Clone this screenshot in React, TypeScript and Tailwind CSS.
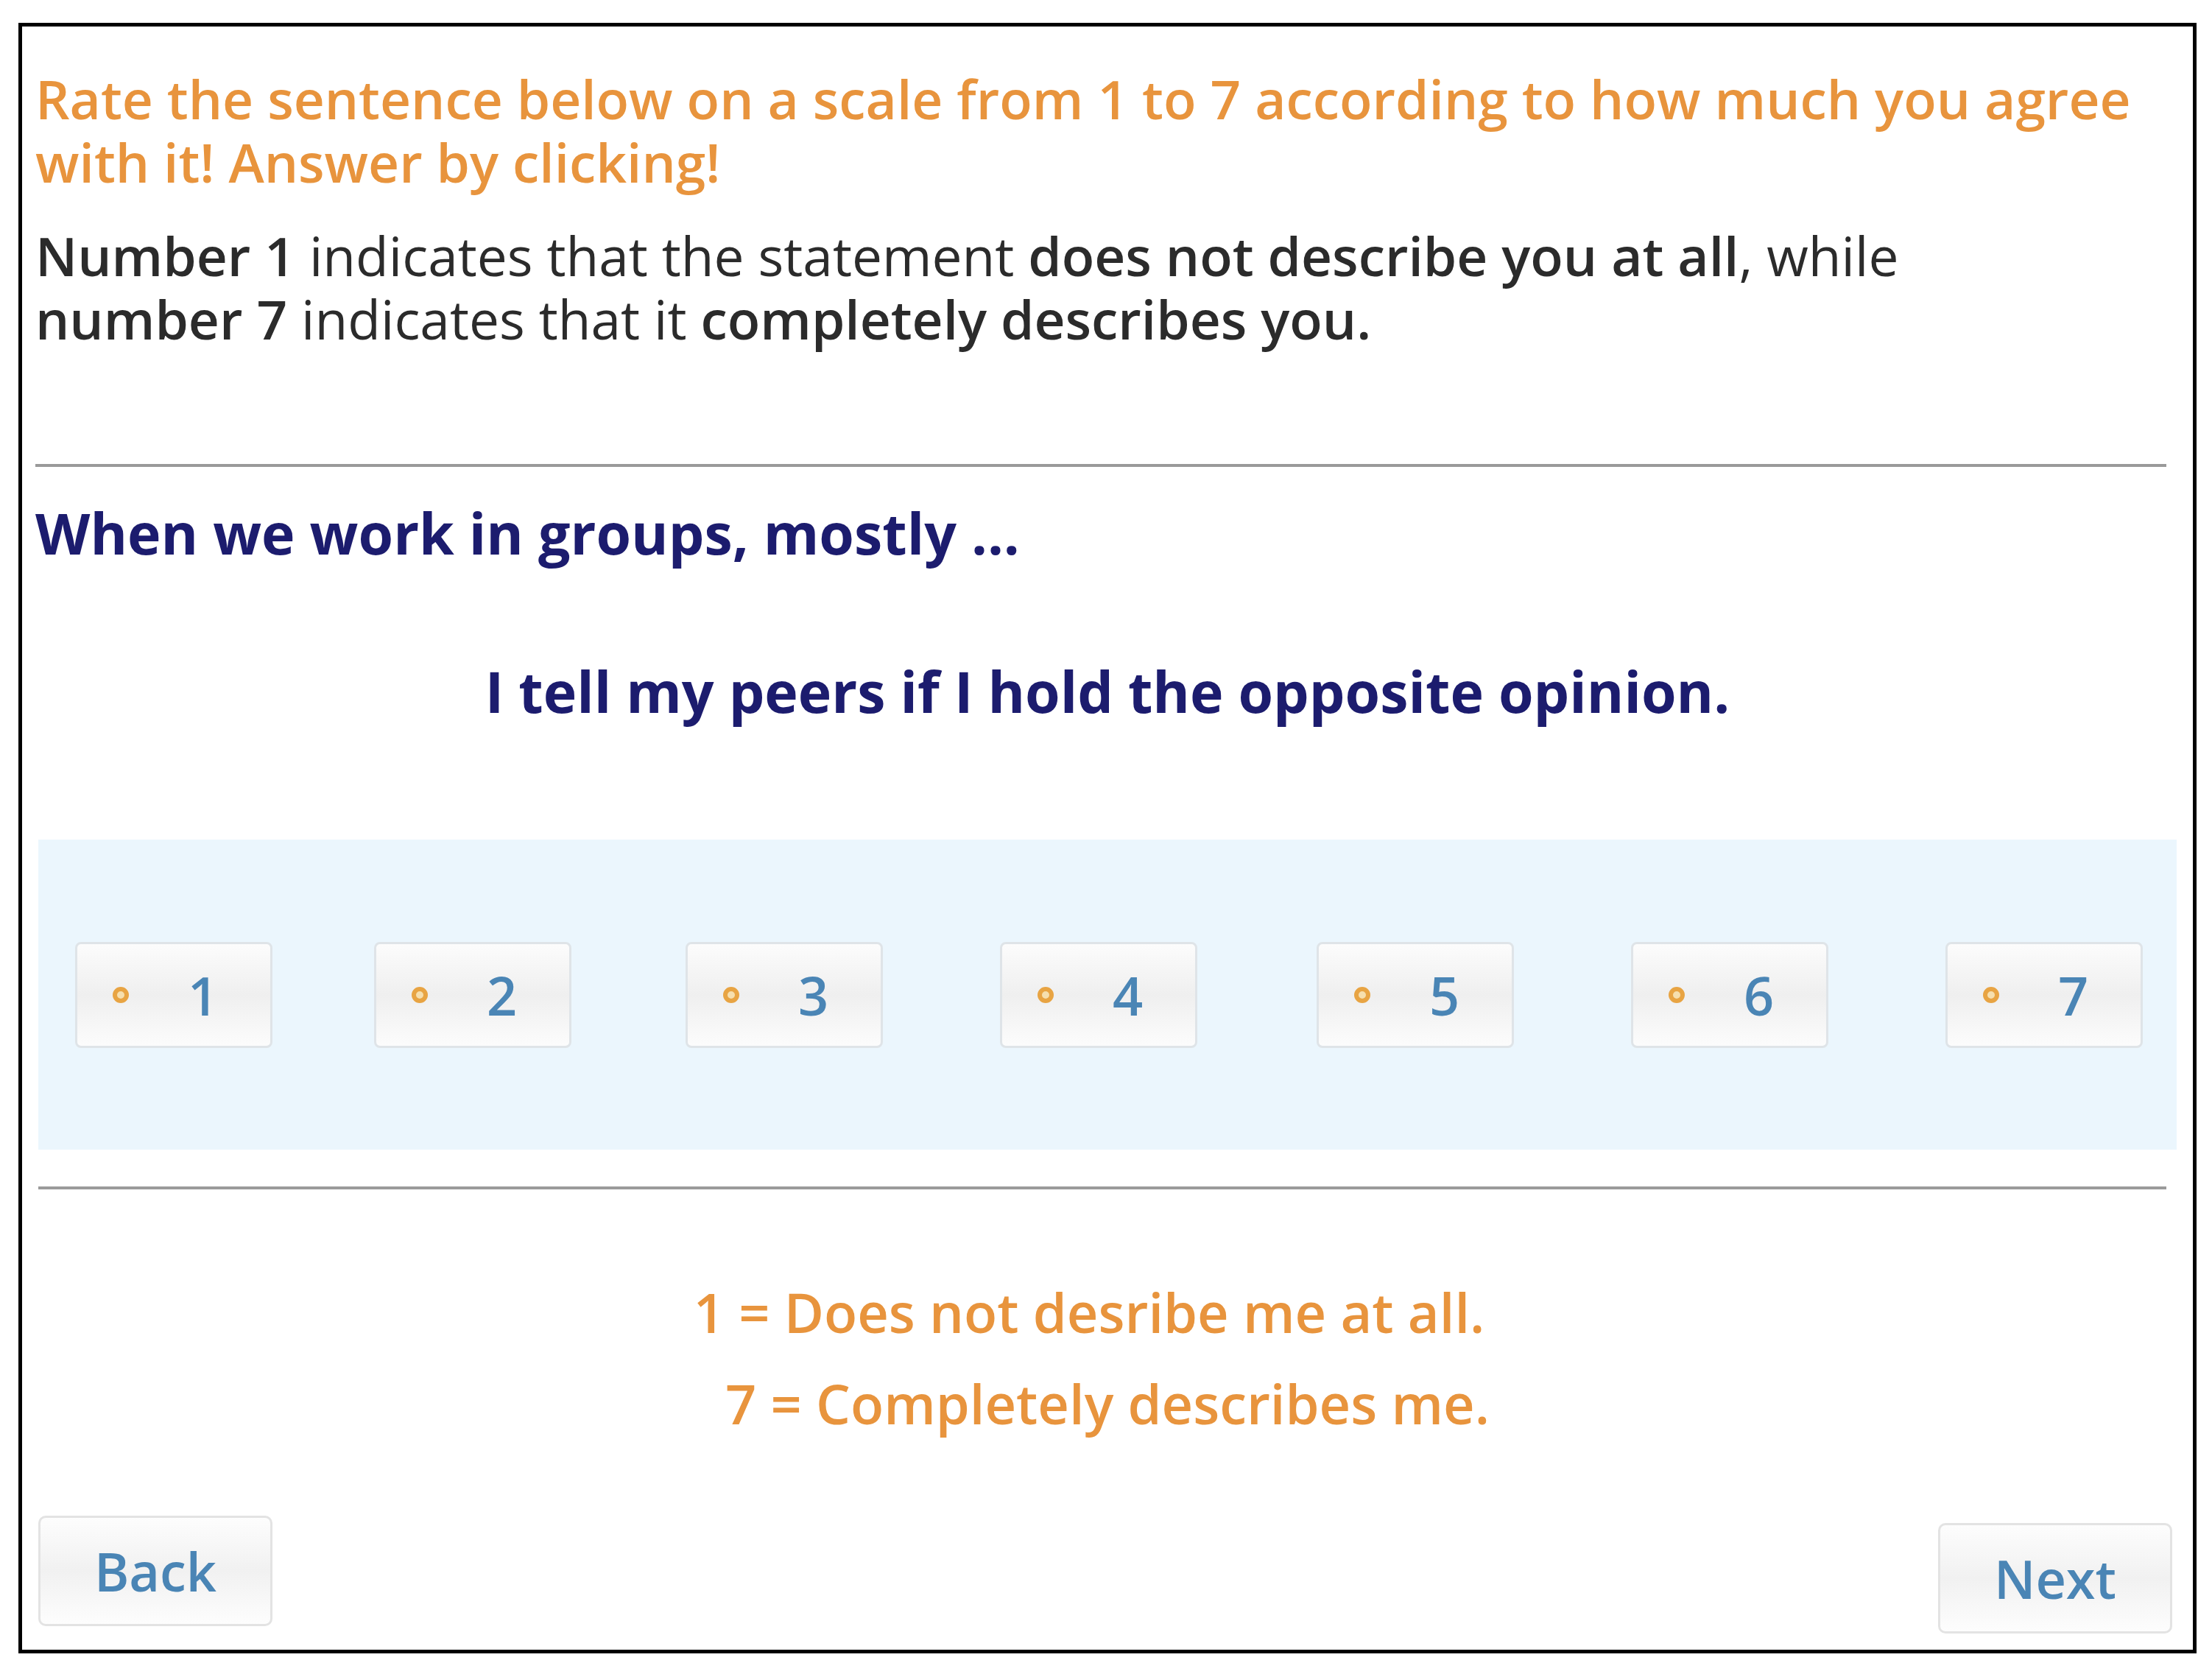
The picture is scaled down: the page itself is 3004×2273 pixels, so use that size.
import React from 'react';

// gaps between the scale buttons are not quite even in the original
const scale = [
  { n: 1, gap: '' },
  { n: 2, gap: 'ml-[138px]' },
  { n: 3, gap: 'ml-[155px]' },
  { n: 4, gap: 'ml-[159px]' },
  { n: 5, gap: 'ml-[162px]' },
  { n: 6, gap: 'ml-[159px]' },
  { n: 7, gap: 'ml-[159px]' },
];

function ScaleButton({ n, className }: { n: number; className?: string }) {
  return (
    <button
      className={
        'flex h-[144px] w-[268px] shrink-0 items-center rounded-[8px] border-[3px] border-[#dfe4e8] bg-gradient-to-b from-[#fcfcfc] via-[#efefef] to-[#fcfcfc] ' +
        (className ?? '')
      }
    >
      <span className="ml-[48px] h-[22px] w-[22px] rounded-full border-[6px] border-[#e8a443] bg-[#f6dfae]" />
      <span className="ml-[80px] text-[72px] font-semibold leading-none text-[#4a85b5]">{n}</span>
    </button>
  );
}

function NavButton({ label, className }: { label: string; className?: string }) {
  return (
    <button
      className={
        'flex h-[150px] w-[318px] items-center justify-center rounded-[10px] border-[3px] border-[#e3e3e3] bg-gradient-to-b from-[#fdfdfd] via-[#f1f1f1] to-[#fdfdfd] text-[72px] font-semibold leading-none text-[#4a85b5] ' +
        (className ?? '')
      }
    >
      {label}
    </button>
  );
}

export default function App() {
  return (
    <div className="min-h-screen bg-white pt-[31px] pl-[25px]" style={{ fontFamily: '"Open Sans", "Noto Sans", sans-serif' }}>
      <div className="flex h-[2214px] w-[2958px] flex-col border-[5px] border-black bg-white px-[18px]">
        <h1 className="mt-[55px] text-[73px] font-semibold leading-[86px] text-[#e8943d]">
          Rate the sentence below on a scale from 1 to 7 according to how much you agree with it! Answer by clicking!
        </h1>
        <p className="mt-[41px] w-[2640px] text-[73px] leading-[86px] text-[#2b2b2b]">
          <b className="font-semibold">Number 1</b> indicates that the statement <b className="font-semibold">does not describe you at all</b>, while{' '}
          <b className="font-semibold">number 7</b> indicates that it <b className="font-semibold">completely describes you.</b>
        </p>

        <hr className="mt-[154px] mr-[18px] border-t-[4px] border-[#9a9a9a]" />

        <h2 className="mt-[47px] text-[77px] font-bold leading-[86px] text-[#1c1c6e]">When we work in groups, mostly ...</h2>
        <p className="mt-[129px] text-center text-[77px] font-bold leading-[86px] text-[#1c1c6e]">
          I tell my peers if I hold the opposite opinion.
        </p>

        <div className="mt-[158px] ml-[4px] mr-[4px] flex h-[421px] items-center bg-[#ebf6fd] px-[50px]">
          {scale.map(s => (
            <ScaleButton key={s.n} n={s.n} className={s.gap} />
          ))}
        </div>

        <hr className="mt-[50px] ml-[4px] mr-[18px] border-t-[4px] border-[#9a9a9a]" />

        <div className="mt-[105px] flex flex-col items-center text-[74px] font-semibold leading-[124px] text-[#e8943d]">
          <p className="pr-[50px]">1 = Does not desribe me at all.</p>
          <p>7 = Completely describes me.</p>
        </div>

        <div className="mt-auto mb-[22px] flex items-start justify-between pl-[4px] pr-[10px]">
          <NavButton label="Back" />
          <NavButton label="Next" className="mt-[10px]" />
        </div>
      </div>
    </div>
  );
}
